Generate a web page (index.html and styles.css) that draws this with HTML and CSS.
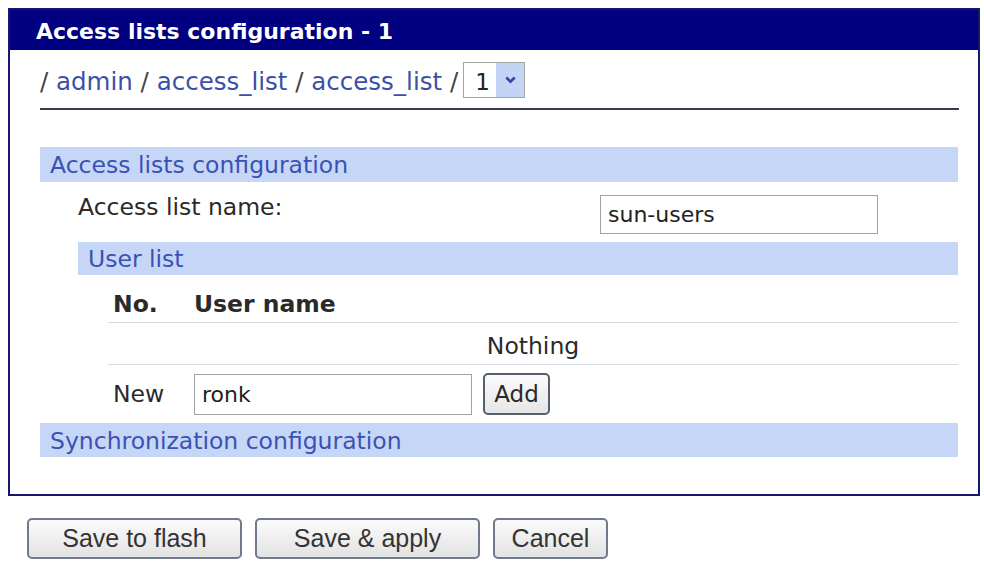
FILE: index.html
```html
<!DOCTYPE html>
<html lang="en">
<head>
  <meta charset="UTF-8">
  <title>Access lists configuration - 1</title>
  <link rel="stylesheet" href="styles.css">
</head>
<body>

  <div class="panel">
    <div class="panel-header">Access lists configuration - 1</div>

    <div class="panel-body">
      <div class="crumbs">
        <span class="path">/ <a href="#">admin</a> / <a href="#">access_list</a> / <a href="#">access_list</a> /</span>
        <div class="select">
          <span class="select-value">1</span>
          <span class="select-arrow">
            <svg width="11" height="8" viewBox="0 0 11 8"><path d="M1.3 1.5 L5.5 5.7 L9.7 1.5" fill="none" stroke="#2d4a9c" stroke-width="2.6"/></svg>
          </span>
        </div>
      </div>

      <div class="section-title">Access lists configuration</div>

      <div class="field">
        <label for="listName">Access list name:</label>
        <input type="text" id="listName" class="text-input" value="sun-users">
      </div>

      <div class="section-title sub-title">User list</div>

      <table class="users">
        <thead>
          <tr>
            <th class="col-no">No.</th>
            <th>User name</th>
          </tr>
        </thead>
        <tbody>
          <tr class="empty">
            <td colspan="2">Nothing</td>
          </tr>
          <tr class="new-row">
            <td class="col-no">New</td>
            <td>
              <div class="new-entry">
                <input type="text" class="text-input user-input" value="ronk">
                <button type="button" class="add-btn">Add</button>
              </div>
            </td>
          </tr>
        </tbody>
      </table>

      <div class="section-title sync-title">Synchronization configuration</div>
    </div>
  </div>

  <div class="actions">
    <button type="button" class="btn btn-flash">Save to flash</button>
    <button type="button" class="btn btn-apply">Save &amp; apply</button>
    <button type="button" class="btn btn-cancel">Cancel</button>
  </div>

</body>
</html>
```

FILE: styles.css
```css
:root {
  --navy: #000080;
  --borde: #16166e;
  --barra: #c6d6f7;
  --azul: #3a52b4;
  --enlace: #3c50a8;
  --linea: #d4dae4;
}

body {
  font-family: 'DejaVu Sans', Verdana, sans-serif;
  font-size: 23.5px;
  color: #2a2a2a;
  margin: 0;
  padding: 8px 0 0 8px;
  background-color: #ffffff;
}

.panel {
  width: 972px;
  box-sizing: border-box;
  border: 2px solid var(--borde);
  background-color: #ffffff;
}

.panel-header {
  background-color: var(--navy);
  color: #ffffff;
  font-weight: bold;
  font-size: 22px;
  height: 36px;
  line-height: 36px;
  padding: 4px 0 0 26px;
}

.panel-body {
  padding: 0 20px 37px 30px;
}

.crumbs {
  display: flex;
  align-items: baseline;
  padding: 12px 0 10px;
  border-bottom: 2px solid #3a3a4c;
  margin-right: -1px;
  font-size: 24.5px;
  line-height: 28px;
}

.path {
  color: #444;
}

.path a {
  color: var(--enlace);
  text-decoration: none;
}

.select {
  display: inline-flex;
  height: 36px;
  box-sizing: border-box;
  margin-left: 5px;
  border: 1px solid #a4a4a4;
  background-color: #ffffff;
}

.select-value {
  width: 32px;
  padding: 4px 0 0 11px;
  box-sizing: border-box;
  font-size: 23px;
  line-height: 30px;
  color: #222;
}

.select-arrow {
  display: flex;
  align-items: center;
  justify-content: center;
  width: 28px;
  background-color: #c4d4f4;
}

.section-title {
  height: 33px;
  line-height: 33px;
  padding: 2px 0 0 10px;
  margin-top: 37px;
  background-color: var(--barra);
  color: var(--azul);
}

.field {
  display: flex;
  justify-content: space-between;
  align-items: flex-start;
  padding: 0 80px 8px 38px;
}

.field label {
  line-height: 28px;
  padding-top: 11px;
}

.field .text-input {
  margin-top: 13px;
}

.text-input {
  width: 278px;
  height: 39px;
  box-sizing: border-box;
  border: 1px solid #a2a2a2;
  padding: 0 7px;
  font-family: 'DejaVu Sans', Verdana, sans-serif;
  font-size: 22px;
  color: #222;
  background-color: #ffffff;
}

.sub-title {
  margin: 0 0 0 38px;
  height: 31px;
  line-height: 31px;
}

.users {
  width: calc(100% - 68px);
  margin-left: 68px;
  border-collapse: collapse;
  border-spacing: 0;
}

.users th {
  text-align: left;
  font-weight: bold;
  height: 43px;
  vertical-align: bottom;
  padding: 0 0 4px 4px;
  line-height: 28px;
  border-bottom: 1px solid var(--linea);
}

.users .col-no {
  width: 77px;
  padding-left: 5px;
}

.empty td {
  text-align: center;
  height: 36px;
  vertical-align: bottom;
  padding-bottom: 4px;
  line-height: 28px;
  border-bottom: 1px solid var(--linea);
}

.new-row td {
  padding: 8px 0 8px 4px;
  vertical-align: middle;
}

.new-row .col-no {
  padding-left: 5px;
}

.new-entry {
  display: flex;
  align-items: center;
  gap: 11px;
}

.user-input {
  height: 41px;
}

.add-btn {
  width: 67px;
  height: 42px;
  padding: 0;
  border: 2px solid #55606e;
  border-radius: 5px;
  background: linear-gradient(#fbfbfb, #e6e6e6);
  font-family: 'DejaVu Sans', Verdana, sans-serif;
  font-size: 23px;
  color: #2a2a2a;
}

.sync-title {
  margin-top: 0;
  height: 32px;
  line-height: 32px;
}

.actions {
  display: flex;
  gap: 13px;
  padding: 22px 0 0 19px;
}

.btn {
  height: 41px;
  padding: 0;
  border: 2px solid #6f7b8b;
  border-radius: 5px;
  background: linear-gradient(#fbfbfb, #e2e2e2);
  font-family: 'Liberation Sans', Arial, sans-serif;
  font-size: 25px;
  color: #333;
}

.btn-flash {
  width: 215px;
}

.btn-apply {
  width: 225px;
}

.btn-cancel {
  width: 115px;
}
```
